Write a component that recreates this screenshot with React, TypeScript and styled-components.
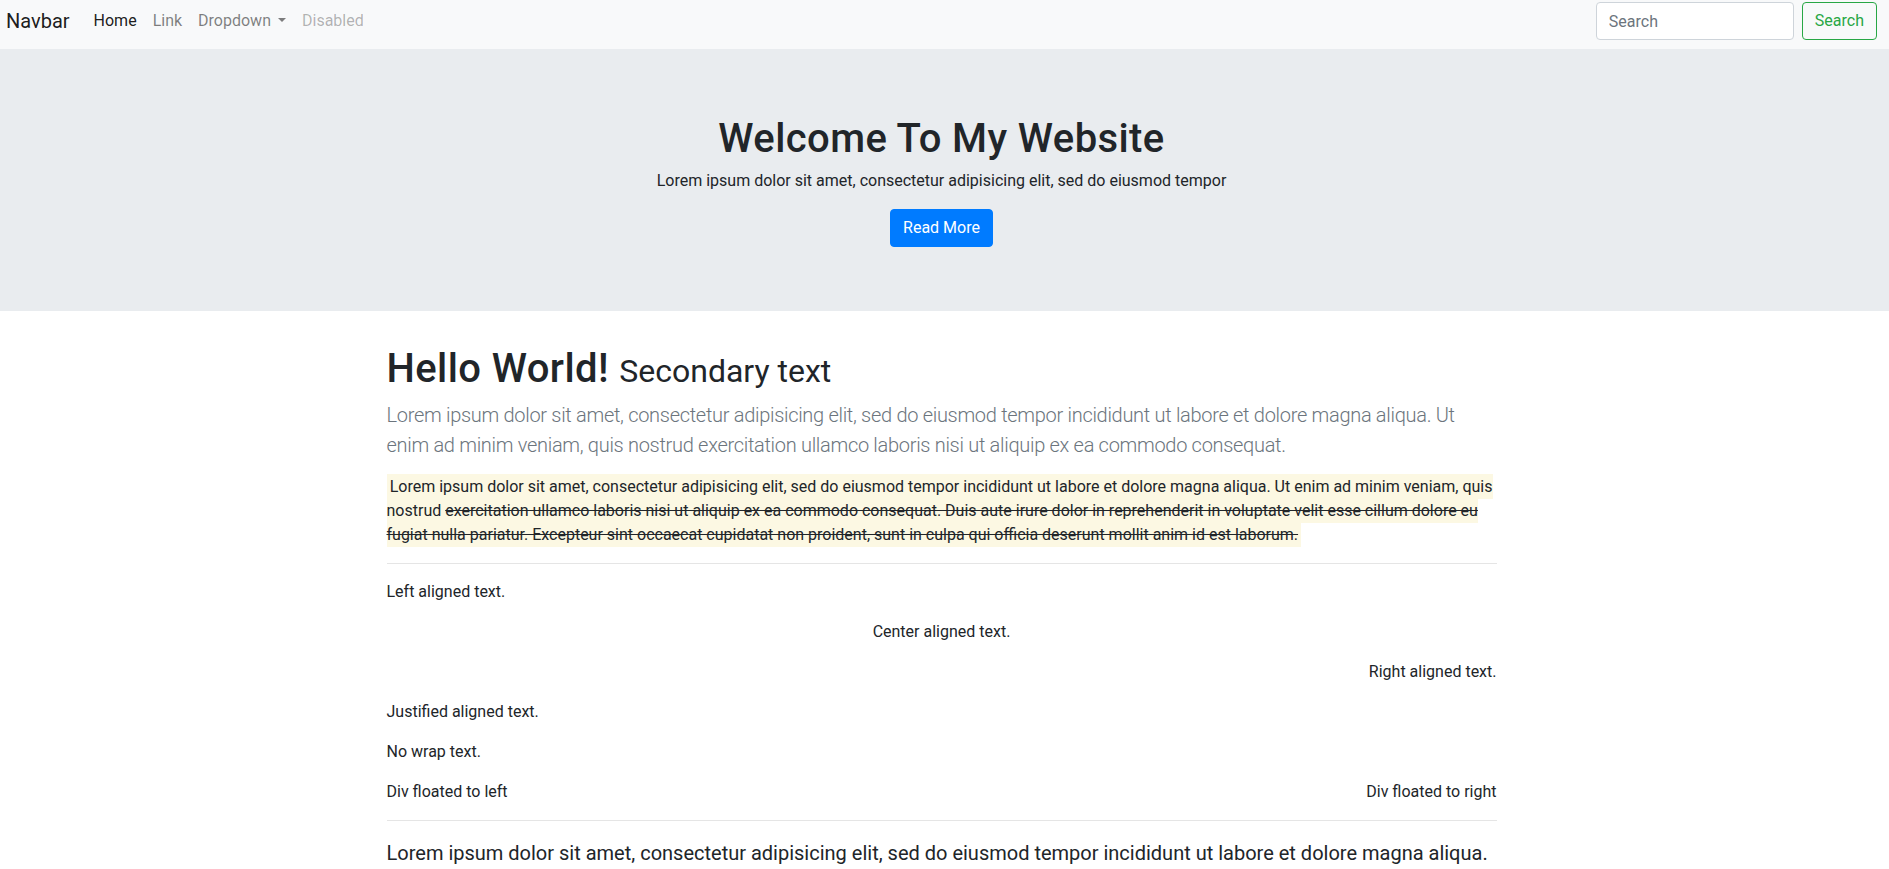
import React from "react";
import styled, { createGlobalStyle } from "styled-components";

const FONT = `Roboto, "Liberation Sans", Arial, sans-serif`;

const GlobalStyle = createGlobalStyle`
  * { box-sizing: border-box; }
  body {
    margin: 0;
    font-family: ${FONT};
    font-size: 16px;
    line-height: 1.5;
    color: #212529;
    background: #fff;
  }
`;

const Navbar = styled.nav`
  display: flex;
  align-items: center;
  height: 49px;
  padding: 1px 12px 8px 6px;
  background: #f8f9fa;
`;

const Brand = styled.a`
  font-size: 20px;
  line-height: 30px;
  padding: 5px 0;
  margin-right: 16px;
  color: rgba(0, 0, 0, 0.9);
  text-decoration: none;
`;

const NavList = styled.ul`
  display: flex;
  flex: 1;
  list-style: none;
  margin: 0;
  padding: 0;
`;

const NavLink = styled.a<{ $state?: "active" | "disabled" }>`
  display: block;
  padding: 8px;
  text-decoration: none;
  color: ${({ $state }) =>
    $state === "active" ? "rgba(0,0,0,.9)" : $state === "disabled" ? "rgba(0,0,0,.3)" : "rgba(0,0,0,.5)"};
`;

const Caret = styled.span`
  display: inline-block;
  width: 0;
  height: 0;
  margin-left: 7px;
  vertical-align: 0.255em;
  border-top: 0.3em solid;
  border-right: 0.3em solid transparent;
  border-left: 0.3em solid transparent;
`;

const SearchForm = styled.form`
  display: flex;
  align-items: center;
  gap: 8px;
`;

const SearchInput = styled.input`
  width: 198px;
  height: 38px;
  padding: 6px 12px;
  font: inherit;
  color: #495057;
  background: #fff;
  border: 1px solid #ced4da;
  border-radius: 4px;
  &::placeholder { color: #6c757d; }
`;

const Button = styled.button<{ $variant: "primary" | "outline" }>`
  height: 38px;
  padding: 6px 12px;
  font: inherit;
  border-radius: 4px;
  border: 1px solid ${({ $variant }) => ($variant === "primary" ? "#007bff" : "#28a745")};
  background: ${({ $variant }) => ($variant === "primary" ? "#007bff" : "transparent")};
  color: ${({ $variant }) => ($variant === "primary" ? "#fff" : "#28a745")};
`;

// content in the reference is centred ~3px left of the window centre
const Jumbotron = styled.header`
  background: #e9ecef;
  padding: 64px 6px 64px 0;
  margin-bottom: 32px;
  text-align: center;
`;

const Title = styled.h1`
  margin: 0 0 8px;
  padding-top: 3px;
  height: 48px;
  font-size: 40px;
  font-weight: 500;
  letter-spacing: 0.4px;
  line-height: 45px;
`;

const SubTitle = styled.small`
  font-size: 80%;
  font-weight: 400;
  letter-spacing: 0;
`;

const Paragraph = styled.p`
  margin: 0 0 16px;
`;

const Main = styled.main`
  padding-right: 6px;
`;

const Container = styled.div`
  max-width: 1140px;
  margin: 0 auto;
  padding: 0 15px;
`;

const Lead = styled.p<{ $muted?: boolean }>`
  margin: 0 0 15px;
  padding-top: 1px;
  font-size: 20px;
  line-height: 30px;
  font-weight: ${({ $muted }) => ($muted ? 300 : 400)};
  letter-spacing: ${({ $muted }) => ($muted ? "-0.3px" : "0")};
  color: ${({ $muted }) => ($muted ? "#6c757d" : "#212529")};
`;

const Mark = styled.mark`
  padding: 0.2em;
  background: #fcf8e3;
  color: inherit;
`;

const Rule = styled.hr`
  margin: 16px 0;
  border: 0;
  border-top: 1px solid rgba(0, 0, 0, 0.1);
`;

const Aligned = styled.p<{ $align: "left" | "center" | "right" | "justify" }>`
  margin: 0 0 16px;
  text-align: ${({ $align }) => $align};
`;

const NoWrap = styled.p`
  margin: 0 0 16px;
  white-space: nowrap;
`;

const FloatRow = styled.div`
  display: flex;
  justify-content: space-between;
`;

export default function App() {
  return (
    <>
      <GlobalStyle />
      <Navbar>
        <Brand href="#">Navbar</Brand>
        <NavList>
          <li><NavLink href="#" $state="active">Home</NavLink></li>
          <li><NavLink href="#">Link</NavLink></li>
          <li><NavLink href="#">Dropdown<Caret /></NavLink></li>
          <li><NavLink $state="disabled">Disabled</NavLink></li>
        </NavList>
        <SearchForm onSubmit={(e) => e.preventDefault()}>
          <SearchInput type="search" placeholder="Search" />
          <Button $variant="outline" type="submit">Search</Button>
        </SearchForm>
      </Navbar>

      <Jumbotron>
        <Title>Welcome To My Website</Title>
        <Paragraph>Lorem ipsum dolor sit amet, consectetur adipisicing elit, sed do eiusmod tempor</Paragraph>
        <Button $variant="primary">Read More</Button>
      </Jumbotron>

      <Main>
        <Container>
          <Title>
            Hello World! <SubTitle>Secondary text</SubTitle>
          </Title>
          <Lead $muted>
            Lorem ipsum dolor sit amet, consectetur adipisicing elit, sed do eiusmod tempor incididunt ut labore et
            dolore magna aliqua. Ut enim ad minim veniam, quis nostrud exercitation ullamco laboris nisi ut aliquip ex
            ea commodo consequat.
          </Lead>
          <Paragraph>
            <Mark>
              {" "}Lorem ipsum dolor sit amet, consectetur adipisicing elit, sed do eiusmod tempor incididunt ut labore
              et dolore magna aliqua. Ut enim ad minim veniam, quis nostrud{" "}
              <s>
                exercitation ullamco laboris nisi ut aliquip ex ea commodo consequat. Duis aute irure dolor in
                reprehenderit in voluptate velit esse cillum dolore eu fugiat nulla pariatur. Excepteur sint occaecat
                cupidatat non proident, sunt in culpa qui officia deserunt mollit anim id est laborum.
              </s>
            </Mark>
          </Paragraph>
          <Rule />
          <Aligned $align="left">Left aligned text.</Aligned>
          <Aligned $align="center">Center aligned text.</Aligned>
          <Aligned $align="right">Right aligned text.</Aligned>
          <Aligned $align="justify">Justified aligned text.</Aligned>
          <NoWrap>No wrap text.</NoWrap>
          <FloatRow>
            <div>Div floated to left</div>
            <div>Div floated to right</div>
          </FloatRow>
          <Rule />
          <Lead>
            Lorem ipsum dolor sit amet, consectetur adipisicing elit, sed do eiusmod tempor incididunt ut labore et
            dolore magna aliqua.
          </Lead>
        </Container>
      </Main>
    </>
  );
}
